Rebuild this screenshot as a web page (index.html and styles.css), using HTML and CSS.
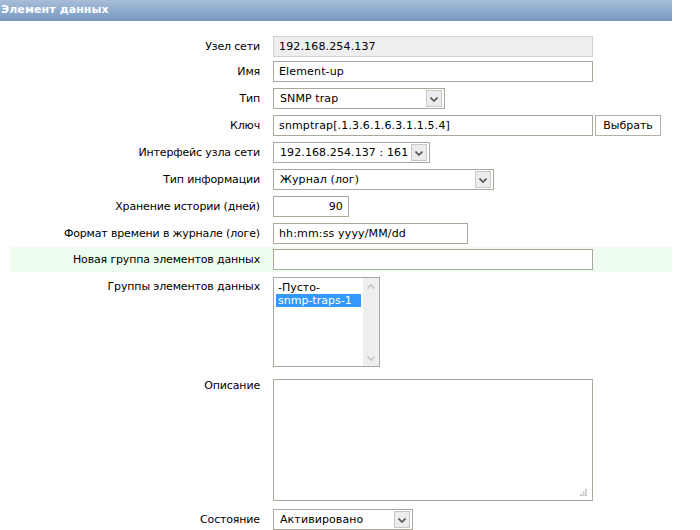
FILE: index.html
```html
<!DOCTYPE html>
<html lang="ru">
<head>
<meta charset="utf-8">
<title>Элемент данных</title>
<link rel="stylesheet" href="styles.css">
</head>
<body>
<div class="header">Элемент данных</div>
<div class="form">
  <div class="row first">
    <div class="label">Узел сети</div>
    <div class="field"><div class="input disabled w320">192.168.254.137</div></div>
  </div>
  <div class="row">
    <div class="label">Имя</div>
    <div class="field"><div class="input w320">Element-up</div></div>
  </div>
  <div class="row">
    <div class="label">Тип</div>
    <div class="field"><div class="select w171"><span class="sel-text">SNMP trap</span><span class="arrow"><svg width="8" height="5" viewBox="0 0 8 5"><path d="M0.5 0.5 L4 4 L7.5 0.5" fill="none" stroke="#555" stroke-width="1.6"/></svg></span></div></div>
  </div>
  <div class="row">
    <div class="label">Ключ</div>
    <div class="field"><div class="input w320">snmptrap[.1.3.6.1.6.3.1.1.5.4]</div><div class="button">Выбрать</div></div>
  </div>
  <div class="row">
    <div class="label">Интерфейс узла сети</div>
    <div class="field"><div class="select w156"><span class="sel-text">192.168.254.137 : 161</span><span class="arrow"><svg width="8" height="5" viewBox="0 0 8 5"><path d="M0.5 0.5 L4 4 L7.5 0.5" fill="none" stroke="#555" stroke-width="1.6"/></svg></span></div></div>
  </div>
  <div class="row">
    <div class="label">Тип информации</div>
    <div class="field"><div class="select w220"><span class="sel-text">Журнал (лог)</span><span class="arrow"><svg width="8" height="5" viewBox="0 0 8 5"><path d="M0.5 0.5 L4 4 L7.5 0.5" fill="none" stroke="#555" stroke-width="1.6"/></svg></span></div></div>
  </div>
  <div class="row">
    <div class="label">Хранение истории (дней)</div>
    <div class="field"><div class="input w75 right">90</div></div>
  </div>
  <div class="row">
    <div class="label">Формат времени в журнале (логе)</div>
    <div class="field"><div class="input w194">hh:mm:ss yyyy/MM/dd</div></div>
  </div>
  <div class="row new-group">
    <div class="label">Новая группа элементов данных</div>
    <div class="field"><div class="input w320"></div></div>
  </div>
  <div class="row groups">
    <div class="label">Группы элементов данных</div>
    <div class="field">
      <div class="listbox">
        <div class="options">
          <div class="opt">-Пусто-</div>
          <div class="opt selected">snmp-traps-1</div>
        </div>
        <div class="scrollbar">
          <svg width="8" height="5" viewBox="0 0 8 5"><path d="M0.5 4.5 L4 1 L7.5 4.5" fill="none" stroke="#c4c4c4" stroke-width="1.6"/></svg>
          <svg width="8" height="5" viewBox="0 0 8 5"><path d="M0.5 0.5 L4 4 L7.5 0.5" fill="none" stroke="#c4c4c4" stroke-width="1.6"/></svg>
        </div>
      </div>
    </div>
  </div>
  <div class="row desc">
    <div class="label">Описание</div>
    <div class="field">
      <div class="textarea">
        <svg class="grip" width="7" height="7" viewBox="0 0 7 7"><g fill="#c8c8c8"><rect x="5" y="0" width="2" height="2"/><rect x="2.5" y="2.5" width="2" height="2"/><rect x="5" y="2.5" width="2" height="2"/><rect x="0" y="5" width="2" height="2"/><rect x="2.5" y="5" width="2" height="2"/><rect x="5" y="5" width="2" height="2"/></g></svg>
      </div>
    </div>
  </div>
  <div class="row state">
    <div class="label">Состояние</div>
    <div class="field"><div class="select w139"><span class="sel-text">Активировано</span><span class="arrow"><svg width="8" height="5" viewBox="0 0 8 5"><path d="M0.5 0.5 L4 4 L7.5 0.5" fill="none" stroke="#555" stroke-width="1.6"/></svg></span></div></div>
  </div>
</div>
</body>
</html>
```
FILE: styles.css
```css
html, body {
  margin: 0;
  padding: 0;
  background: #ffffff;
}
body {
  width: 700px;
  height: 530px;
  overflow: hidden;
  font-family: "DejaVu Sans", Verdana, sans-serif;
  font-size: 11px;
  color: #000;
}
.header {
  width: 672px;
  height: 21px;
  line-height: 20px;
  padding-left: 1px;
  box-sizing: border-box;
  background: linear-gradient(to bottom, #a8bed8 0%, #8eabcd 50%, #7799bf 100%);
  color: #fff;
  font-weight: bold;
  font-size: 11px;
  letter-spacing: 0.1px;
}
.form {
  margin-left: 10px;
  width: 662px;
  padding-top: 12px;
}
.row {
  display: grid;
  grid-template-columns: 253px 1fr;
  padding: 3px 0;
}
.row.first {
  padding-bottom: 1px;
}
.label {
  text-align: right;
  padding-right: 3px;
  line-height: 21px;
  white-space: nowrap;
  letter-spacing: -0.15px;
}
.field {
  padding-left: 10px;
  display: flex;
  align-items: flex-start;
  gap: 2px;
}
.input {
  box-sizing: border-box;
  height: 21px;
  line-height: 19px;
  border: 1px solid #a9a89a;
  background: #fff;
  padding: 0 5px;
  white-space: nowrap;
  overflow: hidden;
  letter-spacing: 0.15px;
}
.input.disabled {
  background: #eeeeee;
  border-color: #d2d2d2;
}
.input.right {
  text-align: right;
}
.w320 { width: 320px; }
.w75 { width: 76px; }
.w194 { width: 195px; }
.w171 { width: 172px; }
.w156 { width: 157px; }
.w220 { width: 221px; }
.w139 { width: 140px; }
.button {
  box-sizing: border-box;
  height: 21px;
  width: 66px;
  line-height: 19px;
  border: 1px solid #b0b0a8;
  background: #fff;
  text-align: center;
}
.select {
  box-sizing: border-box;
  height: 21px;
  border: 1px solid #a9a89a;
  background: #fff;
  display: flex;
  align-items: center;
  justify-content: space-between;
  padding: 0 2px 0 6px;
}
.sel-text {
  white-space: nowrap;
  overflow: hidden;
  line-height: 19px;
  letter-spacing: 0.1px;
}
.arrow {
  box-sizing: border-box;
  flex: none;
  width: 16px;
  height: 17px;
  border: 1px solid #c8c8c8;
  background: #ececec;
  display: flex;
  align-items: center;
  justify-content: center;
}
.arrow svg { display: block; margin-top: 1px; }
.new-group {
  background: #eefdee;
  padding: 2px 0;
}
.groups {
  padding-top: 5px;
  padding-bottom: 6px;
}
.groups .label {
  line-height: 19px;
}
.listbox {
  box-sizing: border-box;
  width: 107px;
  height: 90px;
  border: 1px solid #a9a89a;
  background: #fff;
  display: flex;
}
.options {
  flex: 1;
  padding: 3px 2px 0 2px;
}
.opt {
  line-height: 13px;
  height: 13px;
  padding-left: 2px;
  white-space: nowrap;
}
.opt.selected {
  background: #3399ff;
  color: #fff;
}
.scrollbar {
  width: 16px;
  background: #eeeeee;
  display: flex;
  flex-direction: column;
  justify-content: space-between;
  align-items: center;
  padding: 6px 0 5px;
}
.scrollbar svg { display: block; }
.desc {
  padding-top: 6px;
  padding-bottom: 4px;
}
.desc .label {
  line-height: 13px;
}
.textarea {
  box-sizing: border-box;
  width: 320px;
  height: 122px;
  border: 1px solid #a9a89a;
  background: #fff;
  position: relative;
}
.grip {
  position: absolute;
  right: 5px;
  bottom: 4px;
}
.state {
  padding-top: 4px;
}
```
